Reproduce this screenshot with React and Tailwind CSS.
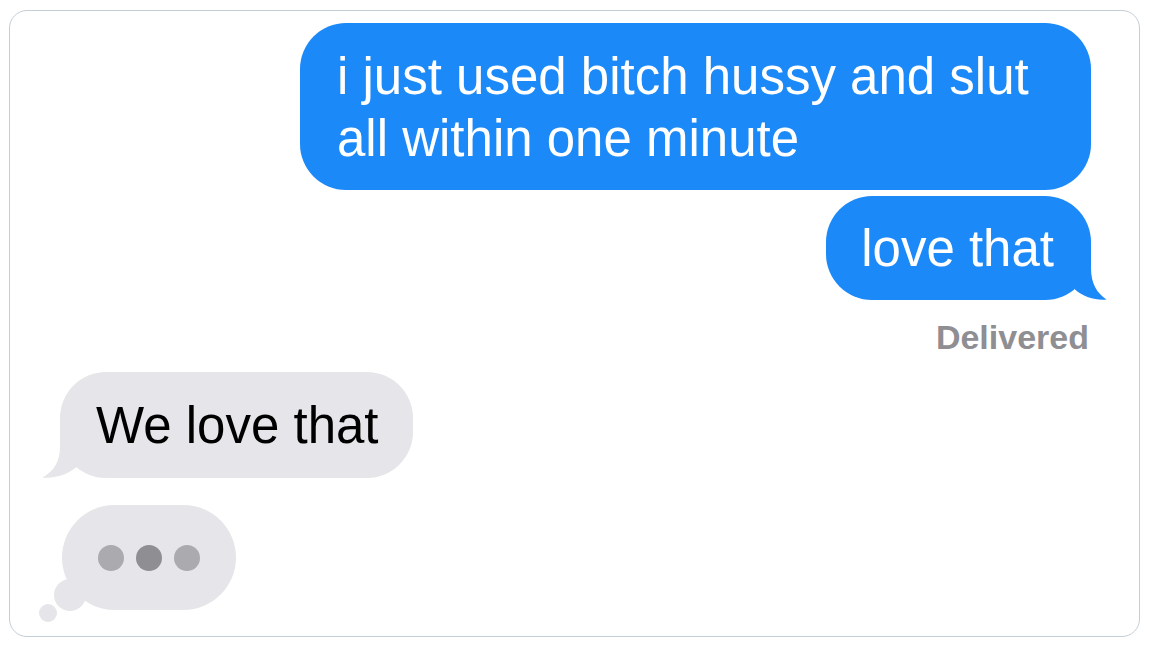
const BlueTail = () => (
    <svg className="absolute right-[-16px] bottom-0" width="32" height="48" viewBox="0 0 32 48">
        <path d="M0 0 H16 V16 C16 32 22 41 31.5 47.5 C21 48.5 9 45.5 0 37.5 Z" fill="#1b89f7" />
    </svg>
);

const GrayTail = () => (
    <svg className="absolute left-[-18px] bottom-0" width="34" height="48" viewBox="0 0 34 48">
        <path d="M34 0 H18 V16 C18 32 12 41 0.5 47.5 C12 48.5 24 45.5 34 37.5 Z" fill="#e5e5ea" />
    </svg>
);

export default function App() {
    const font = { fontFamily: '"Liberation Sans", Arial, sans-serif' };

    return (
        <div className="w-[1150px] h-[646px] bg-white pt-[10px] pl-[9px]" style={font}>
            <div className="w-[1131px] h-[627px] border-[1.5px] border-[#c4ced6] rounded-[18px] pt-[12px] pr-[48px] pl-[50px] flex flex-col">
                {/* Sent */}
                <div className="flex flex-col items-end">
                    <div className="w-[791px] bg-[#1b89f7] text-white rounded-[46px] pl-[37px] pr-[30px] pt-[23px] pb-[20px] text-[51px] leading-[62px]">
                        i just used bitch hussy and slut all within one minute
                    </div>
                    <div className="relative mt-[6px]">
                        <div className="relative z-10 bg-[#1b89f7] text-white rounded-[46px] pl-[35px] pr-[37px] pt-[22px] pb-[20px] text-[51px] leading-[62px]">
                            love that
                        </div>
                        <BlueTail />
                    </div>
                    <div className="mt-[17px] pr-[2px] text-[34px] leading-[40px] font-bold text-[#8e8e93]">Delivered</div>
                </div>

                {/* Received */}
                <div className="flex flex-col items-start mt-[15px]">
                    <div className="relative">
                        <div className="relative z-10 bg-[#e5e5ea] text-black rounded-[46px] pl-[36px] pr-[34px] pt-[23px] pb-[21px] text-[51px] leading-[62px]">
                            We love that
                        </div>
                        <GrayTail />
                    </div>

                    {/* Typing */}
                    <div className="relative mt-[27px] ml-[2px]">
                        <div className="w-[174px] h-[105px] bg-[#e5e5ea] rounded-full flex items-center justify-center gap-[12px]">
                            <span className="w-[26px] h-[26px] rounded-full bg-[#aaaaaf]"></span>
                            <span className="w-[26px] h-[26px] rounded-full bg-[#8e8e93]"></span>
                            <span className="w-[26px] h-[26px] rounded-full bg-[#aaaaaf]"></span>
                        </div>
                        <span className="absolute left-[-8px] top-[74px] w-[32px] h-[32px] rounded-full bg-[#e5e5ea]"></span>
                        <span className="absolute left-[-23px] top-[99px] w-[18px] h-[18px] rounded-full bg-[#e5e5ea]"></span>
                    </div>
                </div>
            </div>
        </div>
    );
}
